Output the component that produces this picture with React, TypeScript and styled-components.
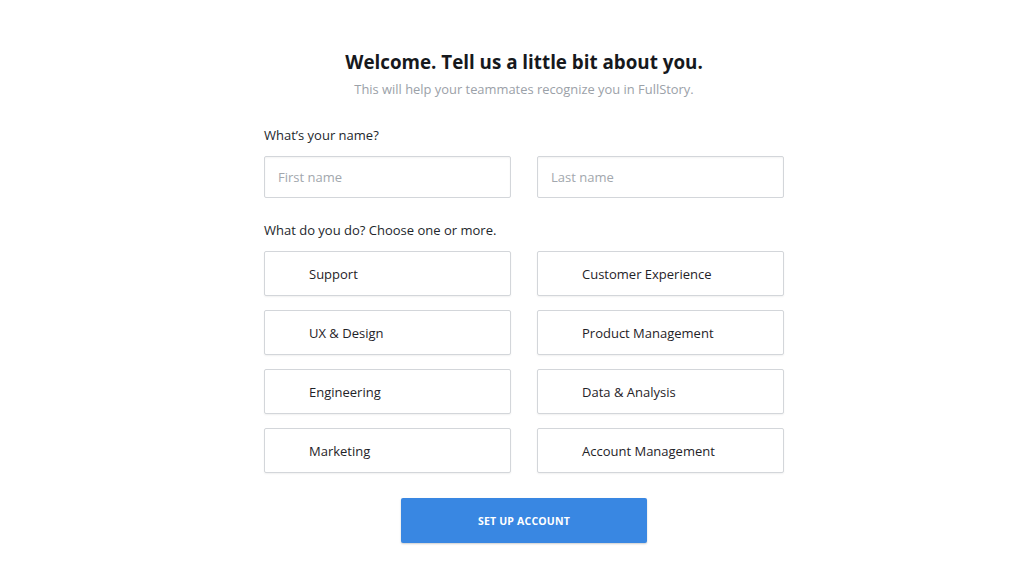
import React from 'react'
import styled, { createGlobalStyle } from 'styled-components'

const GlobalStyle = createGlobalStyle`
  html, body {
    margin: 0;
    padding: 0;
    background: #ffffff;
  }
  body {
    font-family: 'Open Sans', 'Lato', sans-serif;
    -webkit-font-smoothing: antialiased;
  }
`

const Page = styled.div`
  width: 1024px;
  height: 569px;
  display: flex;
  justify-content: center;
  box-sizing: border-box;
  padding: 50px 0 0 24px;
  background: #ffffff;
`

const Form = styled.div`
  width: 520px;
  display: flex;
  flex-direction: column;
`

const Title = styled.h1`
  margin: 0;
  text-align: center;
  font-size: 18.8px;
  line-height: 24px;
  font-weight: 700;
  color: #16191d;
`

const Subtitle = styled.p`
  margin: 6px 0 0;
  text-align: center;
  font-size: 12.9px;
  line-height: 18px;
  color: #9ba1a8;
`

const Label = styled.div<{ $top: number }>`
  margin-top: ${({ $top }) => $top}px;
  font-size: 13px;
  line-height: 18px;
  font-weight: 500;
  color: #23272c;
`

const Grid = styled.div<{ $rowGap: number }>`
  display: grid;
  grid-template-columns: 247px 247px;
  column-gap: 26px;
  row-gap: ${({ $rowGap }) => $rowGap}px;
  margin-top: 12px;
`

const Input = styled.input`
  box-sizing: border-box;
  height: 42px;
  width: 100%;
  border: 1px solid #d3d6da;
  border-radius: 2px;
  padding: 0 13px;
  font-family: inherit;
  font-size: 13px;
  color: #2c3035;
  outline: none;
  box-shadow: inset 0 1px 2px rgba(0, 0, 0, 0.05);

  &::placeholder {
    color: #a2a7ad;
  }
`

const Option = styled.button`
  box-sizing: border-box;
  height: 45px;
  width: 100%;
  display: flex;
  align-items: center;
  padding: 0 0 0 44px;
  background: #ffffff;
  border: 1px solid #d3d6da;
  border-radius: 2px;
  font-family: inherit;
  font-size: 13px;
  font-weight: 500;
  color: #1f2328;
  cursor: pointer;
  text-align: left;
  box-shadow: 0 1px 2px rgba(0, 0, 0, 0.06);
`

const Submit = styled.button`
  align-self: center;
  margin-top: 25px;
  width: 246px;
  height: 45px;
  border: none;
  border-radius: 2px;
  background: #3987e2;
  color: #ffffff;
  font-family: inherit;
  font-size: 10.5px;
  font-weight: 700;
  letter-spacing: 0.2px;
  cursor: pointer;
  box-shadow: 0 1px 2px rgba(0, 0, 0, 0.2);
`

const roles = [
  'Support',
  'Customer Experience',
  'UX & Design',
  'Product Management',
  'Engineering',
  'Data & Analysis',
  'Marketing',
  'Account Management',
]

export default function App() {
  return (
    <>
      <GlobalStyle />
      <Page>
        <Form>
          <Title>Welcome. Tell us a little bit about you.</Title>
          <Subtitle>This will help your teammates recognize you in FullStory.</Subtitle>

          <Label $top={28}>What’s your name?</Label>
          <Grid $rowGap={0}>
            <Input placeholder="First name" />
            <Input placeholder="Last name" />
          </Grid>

          <Label $top={23}>What do you do? Choose one or more.</Label>
          <Grid $rowGap={14}>
            {roles.map((r) => (
              <Option key={r}>{r}</Option>
            ))}
          </Grid>

          <Submit>SET UP ACCOUNT</Submit>
        </Form>
      </Page>
    </>
  )
}
